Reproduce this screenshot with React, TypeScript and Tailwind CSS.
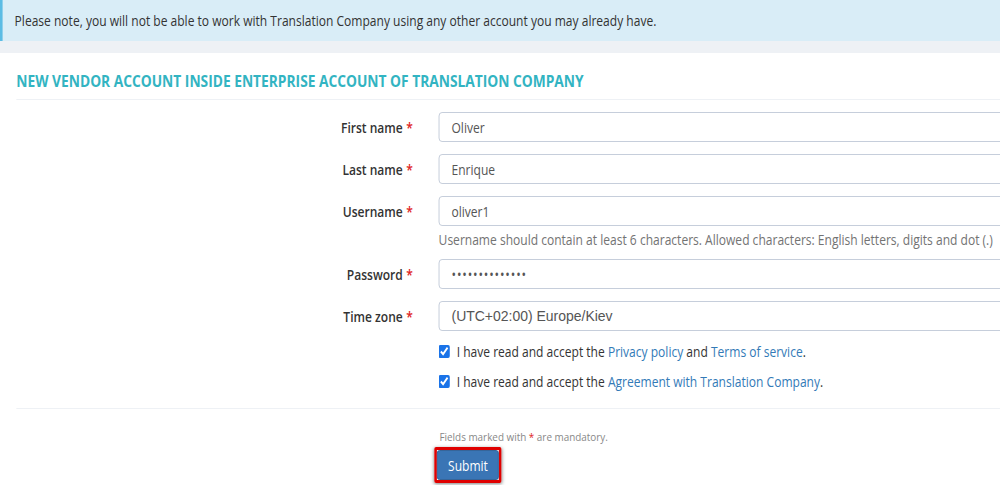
import React from "react";

const Req = () => <span className="text-[#e02222] ml-[4px]">*</span>;

function Row({ label, children }: { label: string; children: React.ReactNode }) {
  return (
    <div className="flex items-center h-[30px]">
      <div className="w-[480px] shrink-0 text-right font-semibold text-[14px] text-[#333]">
        {label}
        <Req />
      </div>
      <div className="ml-[30px] shrink-0">{children}</div>
    </div>
  );
}

const inputCls =
  "w-[700px] h-[30px] border border-[#c2cad8] rounded-[4px] px-[14px] text-[14px] text-[#555] flex items-center bg-white";

export default function App() {
  return (
    <div className="w-[1000px] h-[485px] overflow-hidden bg-white">
      <div
        className="w-[1163px] h-[485px] origin-top-left scale-x-[0.86] bg-[#eef1f5] text-[#333]"
        style={{ fontFamily: '"Open Sans", sans-serif' }}
      >
        <div className="h-[41px] bg-[#d9edf7] border-l-[3px] border-[#5bbce4] flex items-center pl-[14px] text-[14px] text-[#333]">
          Please note, you will not be able to work with Translation Company using any other account you may already have.
        </div>
        <div className="mt-[12px] bg-white h-[500px] pl-[19px]">
          <div className="h-[47px] border-b border-[#eef1f5] flex items-end pb-[9px]">
            <h1 className="text-[16px] font-bold text-[#32b4c2] uppercase leading-[18px]">
              New vendor account inside Enterprise account of Translation Company
            </h1>
          </div>
          <div className="-ml-[19px] pt-[12px]">
            <div className="flex flex-col gap-[12px]">
              <Row label="First name">
                <div className={inputCls}>Oliver</div>
              </Row>
              <Row label="Last name">
                <div className={inputCls}>Enrique</div>
              </Row>
              <div className="mb-[-3px]">
                <Row label="Username">
                  <div className={inputCls}>oliver1</div>
                </Row>
                <div className="ml-[510px] mt-[4px] text-[14px] text-[#737373] leading-[20px]">
                  Username should contain at least 6 characters. Allowed characters: English letters, digits and dot (.)
                </div>
              </div>
              <Row label="Password">
                <div className={inputCls + " tracking-[1px]"}>••••••••••••••</div>
              </Row>
              <Row label="Time zone">
                <div className={inputCls + " text-[#333]"} style={{ fontFamily: '"Liberation Sans", Arial, sans-serif' }}>
                  <span className="inline-block origin-left scale-x-[1.16]">(UTC+02:00) Europe/Kiev</span>
                </div>
              </Row>
            </div>
            <div className="ml-[510px] mt-[10px] flex flex-col gap-[10px] text-[14px] text-[#333]">
              <label className="flex items-center h-[20px]">
                <input type="checkbox" defaultChecked className="w-[13px] h-[13px] accent-[#1a73e8] m-0" />
                <span className="ml-[8px]">
                  I have read and accept the <span className="text-[#337ab7]">Privacy policy</span> and{" "}
                  <span className="text-[#337ab7]">Terms of service</span>.
                </span>
              </label>
              <label className="flex items-center h-[20px]">
                <input type="checkbox" defaultChecked className="w-[13px] h-[13px] accent-[#1a73e8] m-0" />
                <span className="ml-[8px]">
                  I have read and accept the <span className="text-[#337ab7]">Agreement with Translation Company</span>.
                </span>
              </label>
            </div>
            <div className="ml-[19px] mt-[17px] border-t border-[#eef1f5]"></div>
            <div className="ml-[511px] mt-[20px] text-[11.5px] text-[#888] leading-[16px]">
              Fields marked with <span className="text-[#e02222]">*</span> are mandatory.
            </div>
            <div className="ml-[505px] mt-[2px] inline-block border-[3px] border-[#e00000] rounded-[2px] shadow-[0_1px_4px_rgba(0,0,0,0.5)]">
              <button className="h-[30px] px-[12px] bg-[#3a75b5] text-white text-[14px] rounded-[3px] border border-[#2e5f95] block">
                Submit
              </button>
            </div>
          </div>
        </div>
      </div>
    </div>
  );
}
